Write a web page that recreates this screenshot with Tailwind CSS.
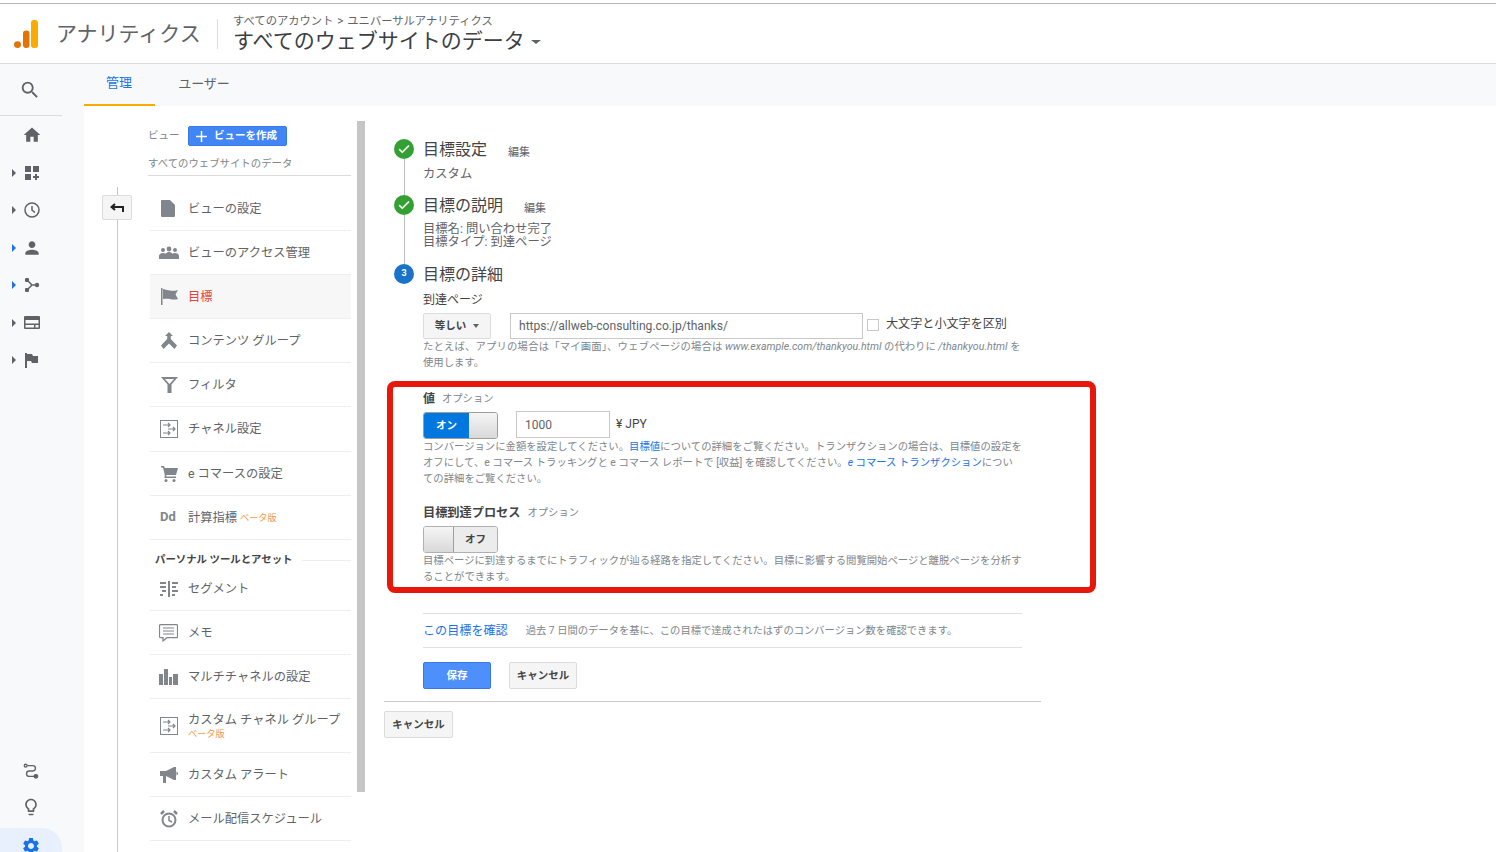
<!DOCTYPE html>
<html lang="ja">

<head>
    <meta charset="UTF-8">
    <meta name="viewport" content="width=device-width, initial-scale=1.0">
    <title>アナリティクス</title>
    <script src="https://cdn.jsdelivr.net/npm/@tailwindcss/browser@4"></script>
</head>

<body class="bg-white font-['Roboto','Noto_Sans_CJK_JP',sans-serif] text-[#5f6368]">
    <div class="relative w-[1496px] h-[852px] overflow-hidden flex flex-col">

        <!-- Header -->
        <header class="h-[61px] shrink-0 border-t border-t-[#b5b5b5] mt-[3px] border-b border-b-[#dadce0] flex items-center pl-[14px]">
            <svg class="w-[25px] h-[28px] mt-[1px] mr-[17px]" viewBox="0 0 25 29" preserveAspectRatio="none">
                <circle cx="3.500" cy="25.500" r="3.500" fill="#e37400" />
                <rect x="9" y="11" width="6.500" height="18" rx="3" fill="#e37400" />
                <rect x="17" y="0" width="7" height="29" rx="3" fill="#f9ab00" />
            </svg>
            <span class="text-[21px] text-[#5f6368] w-[161px] leading-none mt-[1px]">アナリティクス</span>
            <div class="h-[30px] border-l border-[#dadce0] mr-[15px]"></div>
            <div class="flex flex-col -mt-[2px]">
                <span class="text-[11.300px] leading-[16px] text-[#5f6368]">すべてのアカウント <span class="text-[12px] mx-[1px]">&gt;</span> ユニバーサルアナリティクス</span>
                <div class="flex items-center">
                    <span class="text-[21px] leading-[23px] text-[#3c4043]">すべてのウェブサイトのデータ</span>
                    <div class="ml-[6px] mt-[2px] w-0 h-0 border-x-[5px] border-x-transparent border-t-[4px] border-t-[#5f6368]"></div>
                </div>
            </div>
        </header>

        <div class="flex flex-1 min-h-0">
            <!-- Left rail -->
            <nav class="w-[84px] shrink-0 bg-[#f8f9fa] flex flex-col justify-between">
                <div>
                    <div class="w-[62px] h-[52px] border-b border-[#dadce0] flex items-center justify-center pr-[2px]">
                        <svg class="w-[22px] h-[22px] fill-[#5f6368]" viewBox="0 0 24 24"><path d="M15.500 14h-.79l-.28-.27A6.471 6.471 0 0 0 16 9.500 6.500 6.500 0 1 0 9.500 16c1.610 0 3.090-.59 4.230-1.570l.27.28v.79l5 4.990L20.490 19l-4.990-5zm-6 0C7.010 14 5 11.990 5 9.500S7.010 5 9.500 5 14 7.010 14 9.500 11.990 14 9.500 14z" /></svg>
                    </div>
                    <div class="flex flex-col pt-[0.500px]">
                        <div class="h-[37.500px] flex items-center pl-[22px]"><svg class="w-[20px] h-[20px] fill-[#5f6368]" viewBox="0 0 24 24"><path d="M10 20v-6h4v6h5v-8h3L12 3 2 12h3v8z" /></svg></div>
                        <div class="h-[37.500px] flex items-center pl-[12px]">
                            <div class="w-0 h-0 border-y-[4px] border-y-transparent border-l-[4px] border-l-[#5f6368] mr-[8px]"></div>
                            <svg class="w-[16px] h-[16px] fill-[#5f6368]" viewBox="0 0 16 16"><path d="M1 1h6v6H1zM9 1h6v6H9zM1 9h6v6H1zM11 9h2v2h2v2h-2v2h-2v-2H9v-2h2z" /></svg>
                        </div>
                        <div class="h-[37.500px] flex items-center pl-[12px]">
                            <div class="w-0 h-0 border-y-[4px] border-y-transparent border-l-[4px] border-l-[#5f6368] mr-[8px]"></div>
                            <svg class="w-[16px] h-[16px] fill-none stroke-[#5f6368] stroke-[1.500]" viewBox="0 0 16 16"><circle cx="8" cy="8" r="7" /><path d="M8 4v4.200l3 2.300" /></svg>
                        </div>
                        <div class="h-[37.500px] flex items-center pl-[12px]">
                            <div class="w-0 h-0 border-y-[4px] border-y-transparent border-l-[4px] border-l-[#1a73e8] mr-[6px]"></div>
                            <svg class="w-[20px] h-[20px] fill-[#5f6368]" viewBox="0 0 24 24"><path d="M12 12c2.210 0 4-1.790 4-4s-1.790-4-4-4-4 1.790-4 4 1.790 4 4 4zm0 2c-2.670 0-8 1.340-8 4v2h16v-2c0-2.660-5.330-4-8-4z" /></svg>
                        </div>
                        <div class="h-[37.500px] flex items-center pl-[12px]">
                            <div class="w-0 h-0 border-y-[4px] border-y-transparent border-l-[4px] border-l-[#1a73e8] mr-[8px]"></div>
                            <svg class="w-[16px] h-[16px] fill-[#5f6368] stroke-[#5f6368]" viewBox="0 0 16 16"><path d="M3 3l5 5-5 5M8 8h5" fill="none" stroke-width="1.500" /><rect x="1" y="1" width="4" height="4" rx="1" stroke="none" /><rect x="1" y="11" width="4" height="4" rx="1" stroke="none" /><circle cx="13" cy="8" r="2.200" stroke="none" /></svg>
                        </div>
                        <div class="h-[37.500px] flex items-center pl-[12px]">
                            <div class="w-0 h-0 border-y-[4px] border-y-transparent border-l-[4px] border-l-[#5f6368] mr-[8px]"></div>
                            <svg class="w-[16px] h-[13px] fill-[#5f6368]" viewBox="0 0 16 13"><path fill-rule="evenodd" d="M1 0h14a1 1 0 0 1 1 1v11a1 1 0 0 1-1 1H1a1 1 0 0 1-1-1V1a1 1 0 0 1 1-1zm.500 4v3.500h13V4zm0 5v2.500h8.500V9zm10 0v2.500h3V9z" /></svg>
                        </div>
                        <div class="h-[37.500px] flex items-center pl-[12px]">
                            <div class="w-0 h-0 border-y-[4px] border-y-transparent border-l-[4px] border-l-[#5f6368] mr-[9px]"></div>
                            <svg class="w-[13px] h-[15px] fill-[#5f6368]" viewBox="0 0 13 15"><path d="M0 0h2v15H0zM2 1h5l1 2h5v7H7L6 8H2z" /></svg>
                        </div>
                    </div>
                </div>
                <div class="flex flex-col">
                    <div class="w-[62px] h-[36px] pb-[6px] flex items-center justify-center">
                        <svg class="w-[16px] h-[16px] fill-none stroke-[#5f6368] stroke-[1.500]" viewBox="0 0 18 18"><circle cx="3" cy="3" r="1.600" /><path d="M5 3h6a3 3 0 0 1 0 6H7a3 3 0 0 0 0 6h6" /><circle cx="14.500" cy="15" r="2" class="fill-[#5f6368]" /></svg>
                    </div>
                    <div class="w-[62px] h-[36px] pb-[6px] flex items-center justify-center">
                        <svg class="w-[20px] h-[20px] fill-[#5f6368]" viewBox="0 0 24 24"><path d="M9 21c0 .55.45 1 1 1h4c.55 0 1-.45 1-1v-1H9v1zm3-19C8.140 2 5 5.140 5 9c0 2.380 1.190 4.470 3 5.740V17c0 .55.45 1 1 1h6c.55 0 1-.45 1-1v-2.260c1.810-1.270 3-3.360 3-5.740 0-3.860-3.140-7-7-7zm2.850 11.100l-.85.6V16h-4v-2.300l-.85-.6A4.997 4.997 0 0 1 7 9c0-2.760 2.240-5 5-5s5 2.240 5 5c0 1.630-.8 3.160-2.150 4.100z" /></svg>
                    </div>
                    <div class="w-[62px] h-[24px] bg-[#e8f0fe] rounded-tr-[20px] flex items-start justify-center pt-[8px] overflow-hidden">
                        <svg class="w-[20px] h-[20px] shrink-0 fill-[#1a73e8]" viewBox="0 0 24 24"><path d="M19.140 12.940c.04-.3.06-.61.06-.94 0-.32-.02-.64-.07-.94l2.030-1.580a.49.49 0 0 0 .12-.61l-1.920-3.320a.488.488 0 0 0-.59-.22l-2.390.96c-.5-.38-1.030-.7-1.620-.94l-.36-2.540a.484.484 0 0 0-.48-.41h-3.840c-.24 0-.43.17-.47.41l-.36 2.540c-.59.24-1.130.57-1.620.94l-2.390-.96c-.22-.08-.47 0-.59.22L2.740 8.870c-.12.21-.08.47.12.61l2.030 1.580c-.05.3-.09.63-.09.94s.02.64.07.94l-2.030 1.580a.49.49 0 0 0-.12.61l1.920 3.320c.12.22.37.29.59.22l2.390-.96c.5.38 1.030.7 1.620.94l.36 2.540c.05.24.24.41.48.41h3.840c.24 0 .44-.17.47-.41l.36-2.540c.59-.24 1.130-.56 1.620-.94l2.390.96c.22.08.47 0 .59-.22l1.920-3.320c.12-.22.07-.47-.12-.61l-2.010-1.580zM12 15.600c-1.980 0-3.600-1.620-3.600-3.600s1.620-3.600 3.600-3.600 3.600 1.620 3.600 3.600-1.620 3.600-3.600 3.600z" /></svg>
                    </div>
                </div>
            </nav>

            <div class="flex-1 flex flex-col min-w-0">
                <!-- Tabs -->
                <div class="h-[42px] shrink-0 bg-[#f8f9fa] flex text-[13px]">
                    <div class="w-[71px] border-b-2 border-[#f9ab00] text-[#1a73e8] flex items-center justify-center pb-[2px] pr-[1px]">管理</div>
                    <div class="w-[98px] flex items-center justify-center pb-[2px] text-[#5f6368]">ユーザー</div>
                </div>

                <div class="flex flex-1 min-h-0">
                    <!-- Admin column -->
                    <div class="flex shrink-0 w-[281px]">
                        <div class="relative w-[66px] shrink-0">
                            <div class="absolute left-[33px] top-[81px] bottom-0 border-l border-[#c8c8c8]"></div>
                            <div class="absolute left-[18px] top-[89px] w-[30px] h-[25px] bg-[#f5f5f5] border border-[#dcdcdc] rounded-[2px] flex items-center justify-center">
                                <svg class="w-[14px] h-[10px] fill-none stroke-[#222] stroke-2" viewBox="0 0 14 10"><path d="M5 1L1.500 4 5 7M2 4h11v5" /></svg>
                            </div>
                        </div>
                        <div class="w-[207px] shrink-0 text-[12.250px] leading-[16px]">
                            <div class="h-[70px] -ml-[2px] w-[203px] border-b border-[#dadce0] pt-[20px]">
                                <div class="flex items-center h-[20px]">
                                    <span class="text-[10.500px] text-[#80868b] w-[40px]">ビュー</span>
                                    <div class="w-[99px] h-[20px] bg-[#4285f4] border border-[#3b78e7] rounded-[2px] flex items-center pl-[7px] text-white text-[10.500px] font-bold">
                                        <svg class="w-[11px] h-[11px] stroke-white stroke-[1.500] mr-[7px]" viewBox="0 0 11 11"><path d="M5.500 0v11M0 5.500h11" /></svg>
                                        ビューを作成
                                    </div>
                                </div>
                                <div class="text-[10.400px] text-[#80868b] mt-[10px]">すべてのウェブサイトのデータ</div>
                            </div>
                            <div class="mt-[11px] w-[201px] flex flex-col">
                                <div class="h-[44px] border-b border-[#eeeeee] flex items-center">
                                    <div class="w-[38px] flex justify-center pr-[2px]"><svg class="w-[14px] h-[17px] fill-[#80868b]" viewBox="0 0 14 17"><path d="M1 0h8l5 5v11a1 1 0 0 1-1 1H1a1 1 0 0 1-1-1V1a1 1 0 0 1 1-1z" /></svg></div>
                                    <span>ビューの設定</span>
                                </div>
                                <div class="h-[44px] border-b border-[#eeeeee] flex items-center">
                                    <div class="w-[38px] flex justify-center"><svg class="w-[22px] h-[22px] fill-[#80868b]" viewBox="0 0 22 22"><circle cx="5" cy="8" r="2" /><circle cx="11" cy="7" r="2.400" /><circle cx="17" cy="8" r="2" /><path d="M1 17v-3c0-2 2-3 4-3 1 0 2 .3 2.500.7C8.500 10.500 10 10 11 10s2.500.5 3.500 1.700c.5-.4 1.500-.7 2.500-.7 2 0 4 1 4 3v3z" /></svg></div>
                                    <span>ビューのアクセス管理</span>
                                </div>
                                <div class="h-[44px] bg-[#f7f7f7] border-b border-[#eeeeee] flex items-center">
                                    <div class="w-[38px] flex justify-center"><svg class="w-[17px] h-[17px] fill-[#80868b]" viewBox="0 0 17 17"><path d="M0 0h1.500v17H0zM2 1c3 1 5 1 7 1.500 2 .5 5 .5 8-.5l-2.500 4.500L17 11c-3 1-6 .5-8 0s-4-.500-7 0z" /></svg></div>
                                    <span class="text-[#ea4335]">目標</span>
                                </div>
                                <div class="h-[44px] border-b border-[#eeeeee] flex items-center">
                                    <div class="w-[38px] flex justify-center"><svg class="w-[16px] h-[17px] fill-[#80868b]" viewBox="0 0 16 17"><path d="M8 0l4 4H9.800v3L16 13.500 13.500 17 8 11.500 2.500 17 0 13.500 6.200 7V4H4z" /></svg></div>
                                    <span>コンテンツ グループ</span>
                                </div>
                                <div class="h-[44px] border-b border-[#eeeeee] flex items-center">
                                    <div class="w-[38px] flex justify-center"><svg class="w-[17px] h-[16px] fill-[#80868b]" viewBox="0 0 17 16"><path fill-rule="evenodd" d="M0 0h17l-6.500 7.500V16h-4V7.500zM4 2l4.500 5L13 2z" /></svg></div>
                                    <span>フィルタ</span>
                                </div>
                                <div class="h-[45px] border-b border-[#eeeeee] flex items-center">
                                    <div class="w-[38px] flex justify-center"><svg class="w-[18px] h-[18px] fill-none stroke-[#80868b]" viewBox="0 0 18 18"><rect x=".5" y=".5" width="17" height="17" /><path d="M3 5h7M8 3l2 2-2 2M15 9H8M13 7l2 2-2 2M3 13h7M8 11l2 2-2 2" stroke-width="1.200" /></svg></div>
                                    <span>チャネル設定</span>
                                </div>
                                <div class="h-[44px] border-b border-[#eeeeee] flex items-center">
                                    <div class="w-[38px] flex justify-center"><svg class="w-[17px] h-[16px] fill-[#80868b]" viewBox="0 0 17 16"><path d="M0 0h3l.8 2H17l-2 7H5.500l-.3 1.500H15V12H3.500L3.800 9 2 1.500H0z" /><circle cx="5" cy="14.500" r="1.500" /><circle cx="13" cy="14.500" r="1.500" /></svg></div>
                                    <span>e コマースの設定</span>
                                </div>
                                <div class="h-[44px] border-b border-[#eeeeee] flex items-center">
                                    <div class="w-[38px] pl-[10px] text-[13px] font-bold text-[#80868b] -mt-[2px]">Dd</div>
                                    <span>計算指標</span><span class="ml-[3px] text-[9.200px] text-[#f29c4b]">ベータ版</span>
                                </div>
                                <div class="h-[27px] flex items-start pt-[12px] pl-[5px] font-bold text-[10.400px] text-[#444]">
                                    <span class="whitespace-nowrap leading-[16px]">パーソナル ツールとアセット</span>
                                    <div class="flex-1 border-t border-[#eeeeee] ml-[10px] mt-[8px]"></div>
                                </div>
                                <div class="h-[44px] border-b border-[#eeeeee] flex items-center">
                                    <div class="w-[38px] flex justify-center"><svg class="w-[18px] h-[16px] fill-[#80868b]" viewBox="0 0 18 16"><path d="M8 0h2v16H8zM0 1h6v2H0zM0 5h6v2H0zM2 9h4v2H2zM0 13h3v2H0zM12 1h6v2h-6zM12 5h4v2h-4zM12 9h6v2h-6zM12 13h3v2h-3z" /></svg></div>
                                    <span>セグメント</span>
                                </div>
                                <div class="h-[44px] border-b border-[#eeeeee] flex items-center">
                                    <div class="w-[38px] flex justify-center pr-[2px]"><svg class="w-[19px] h-[18px] fill-none stroke-[#80868b]" viewBox="0 0 19 18"><path d="M1.500.7h16a1 1 0 0 1 1 1v11a1 1 0 0 1-1 1H8L4 17v-3.300H1.500a1 1 0 0 1-1-1v-11a1 1 0 0 1 1-1z" stroke-width="1.200" /><path d="M4 4h11M4 7h11M4 10h11" stroke-width="1.200" /></svg></div>
                                    <span>メモ</span>
                                </div>
                                <div class="h-[44px] border-b border-[#eeeeee] flex items-center">
                                    <div class="w-[38px] flex justify-center pr-[2px]"><svg class="w-[19px] h-[16px] fill-[#80868b]" viewBox="0 0 19 16"><path d="M0 5h4v11H0zM5 0h4v16H5zM10 8h3v8h-3zM14 5h5v11h-5z" /></svg></div>
                                    <span>マルチチャネルの設定</span>
                                </div>
                                <div class="h-[54px] border-b border-[#eeeeee] flex items-center">
                                    <div class="w-[38px] flex justify-center"><svg class="w-[18px] h-[18px] fill-none stroke-[#80868b]" viewBox="0 0 18 18"><rect x=".5" y=".5" width="17" height="17" /><path d="M3 5h7M8 3l2 2-2 2M15 9H8M13 7l2 2-2 2M3 13h7M8 11l2 2-2 2" stroke-width="1.200" /></svg></div>
                                    <div class="flex flex-col pt-[2px]">
                                        <span class="leading-[15px] whitespace-nowrap">カスタム チャネル グループ</span>
                                        <span class="text-[9.200px] leading-[12px] text-[#f29c4b]">ベータ版</span>
                                    </div>
                                </div>
                                <div class="h-[44px] border-b border-[#eeeeee] flex items-center">
                                    <div class="w-[38px] flex justify-center"><svg class="w-[18px] h-[16px] fill-[#80868b]" viewBox="0 0 18 16"><path d="M0 4h6l8-4h2v13h-2L6 9v7H3V9H0zM16.500 4.500c1 .5 1.500 1 1.500 2s-.5 1.500-1.500 2z" /></svg></div>
                                    <span>カスタム アラート</span>
                                </div>
                                <div class="h-[44px] border-b border-[#eeeeee] flex items-center">
                                    <div class="w-[38px] flex justify-center"><svg class="w-[18px] h-[18px] fill-none stroke-[#80868b]" viewBox="0 0 18 18"><circle cx="9" cy="10" r="6.500" stroke-width="2" /><path d="M9 6v4.500l3 1.500" stroke-width="1.500" /><path d="M1 4l3-3M17 4l-3-3" stroke-width="2.500" /></svg></div>
                                    <span>メール配信スケジュール</span>
                                </div>
                            </div>
                        </div>
                        <div class="w-[8px] h-[671px] mt-[15px] bg-[#c6c6c6]"></div>
                    </div>

                    <!-- Goal form -->
                    <div class="pl-[19px] w-[676px] shrink-0 pt-[33px]">
                        <div class="flex h-[56px]">
                            <div class="w-[39px] flex flex-col items-start pl-[10px]">
                                <div class="w-[20px] h-[20px] rounded-full bg-[#34a034] flex items-center justify-center shrink-0">
                                    <svg class="w-[14px] h-[14px] fill-white" viewBox="0 0 24 24"><path d="M9 16.170L4.830 12l-1.420 1.410L9 19 21 7l-1.410-1.410z" stroke="white" /></svg>
                                </div>
                                <div class="ml-[9.500px] flex-1 border-l border-[#bdbdbd]"></div>
                            </div>
                            <div>
                                <div class="h-[20px] pt-[2px] flex items-center">
                                    <span class="text-[16px] text-[#444]">目標設定</span>
                                    <span class="ml-[21px] mt-[6px] text-[11px] text-[#5f6368]">編集</span>
                                </div>
                                <div class="mt-[6px] text-[12.300px] leading-[18px]">カスタム</div>
                            </div>
                        </div>
                        <div class="flex h-[69px]">
                            <div class="w-[39px] flex flex-col items-start pl-[10px]">
                                <div class="w-[20px] h-[20px] rounded-full bg-[#34a034] flex items-center justify-center shrink-0">
                                    <svg class="w-[14px] h-[14px] fill-white" viewBox="0 0 24 24"><path d="M9 16.170L4.830 12l-1.420 1.410L9 19 21 7l-1.410-1.410z" stroke="white" /></svg>
                                </div>
                                <div class="ml-[9.500px] flex-1 border-l border-[#bdbdbd]"></div>
                            </div>
                            <div>
                                <div class="h-[20px] pt-[2px] flex items-center">
                                    <span class="text-[16px] text-[#444]">目標の説明</span>
                                    <span class="ml-[21px] mt-[6px] text-[11px] text-[#5f6368]">編集</span>
                                </div>
                                <div class="mt-[8px] text-[12.300px] leading-[13px]">目標名: 問い合わせ完了<br>目標タイプ: 到達ページ</div>
                            </div>
                        </div>
                        <div class="flex">
                            <div class="w-[39px] pl-[10px]">
                                <div class="w-[20px] h-[20px] rounded-full bg-[#1a73c8] text-white text-[9px] font-bold flex items-center justify-center">3</div>
                            </div>
                            <div class="w-[600px]">
                                <div class="h-[20px] pt-[2px] flex items-center text-[16px] text-[#444]">目標の詳細</div>
                                <div class="mt-[8px] text-[12px] leading-[16px] text-[#444]">到達ページ</div>
                                <div class="mt-[5px] flex items-start h-[26px] whitespace-nowrap">
                                    <div class="w-[68px] h-[26px] bg-[#f5f5f5] border border-[#dcdcdc] rounded-[2px] flex items-center justify-center text-[10.500px] font-bold text-[#444]">
                                        等しい
                                        <div class="ml-[7px] w-0 h-0 border-x-[3px] border-x-transparent border-t-[4px] border-t-[#5f6368]"></div>
                                    </div>
                                    <div class="ml-[19px] w-[353px] h-[26px] border border-[#c8c8c8] flex items-center pl-[8px] text-[12.100px] text-[#5f6368]">https://allweb-consulting.co.jp/thanks/</div>
                                    <div class="ml-[4px] mt-[6px] w-[12px] h-[12px] border border-[#c8c8c8]"></div>
                                    <span class="ml-[7px] text-[12.100px] leading-[26px] -mt-[2px] text-[#444]">大文字と小文字を区別</span>
                                </div>
                                <p class="text-[10.350px] leading-[16px] text-[#80868b] whitespace-nowrap"><span class="tracking-[0.170px]">たとえば、アプリの場合は「マイ画面」、ウェブページの場合は</span> <i class="text-[10.600px]">www.example.com/thankyou.html</i> の代わりに <i class="text-[10.600px]">/thankyou.html</i> を<br>使用します。</p>

                                <div class="mt-[20px] h-[16px] flex items-center">
                                    <span class="text-[12px] font-bold text-[#444]">値</span>
                                    <span class="ml-[7px] text-[10.300px] text-[#80868b]">オプション</span>
                                </div>
                                <div class="mt-[4px] flex h-[28px]">
                                    <div class="mt-[1px] w-[75px] h-[27px] flex rounded-[3px] border border-[#9e9e9e] overflow-hidden">
                                        <div class="w-[45px] bg-[#0277e0] text-white text-[10.500px] font-bold flex items-center justify-center">オン</div>
                                        <div class="flex-1 bg-linear-to-b from-[#f5f5f5] to-[#d9d9d9]"></div>
                                    </div>
                                    <div class="ml-[18px] w-[94px] h-[27px] border border-[#c8c8c8] flex items-center pl-[8px] text-[12px]">1000</div>
                                    <span class="ml-[6px] text-[12px] leading-[27px] text-[#444]">¥ JPY</span>
                                </div>
                                <p class="text-[10.350px] leading-[16px] text-[#80868b] whitespace-nowrap">コンバージョンに金額を設定してください。<span class="text-[#1a73e8]">目標値</span>についての詳細をご覧ください。トランザクションの場合は、目標値の設定を<br>オフにして、e コマース トラッキングと e コマース レポートで [収益] を確認してください。<span class="text-[#1a73e8]"><i>e</i> コマース トランザクション</span>につい<br>ての詳細をご覧ください。</p>

                                <div class="mt-[16px] h-[20px] flex items-center">
                                    <span class="text-[12.200px] font-bold text-[#444]">目標到達プロセス</span>
                                    <span class="ml-[7px] text-[10.300px] text-[#80868b]">オプション</span>
                                </div>
                                <div class="mt-[3px] w-[75px] h-[27px] flex rounded-[3px] border border-[#b0b0b0] overflow-hidden">
                                    <div class="w-[30px] bg-linear-to-b from-[#f5f5f5] to-[#d9d9d9] border-r border-[#9e9e9e]"></div>
                                    <div class="flex-1 bg-[#ececec] text-[#444] text-[10.500px] font-bold flex items-center justify-center">オフ</div>
                                </div>
                                <p class="text-[10.350px] leading-[16px] text-[#80868b] whitespace-nowrap">目標ページに到達するまでにトラフィックが辿る経路を指定してください。目標に影響する閲覧開始ページと離脱ページを分析す<br>ることができます。</p>

                                <div class="mt-[28px] w-[599px] h-[35px] pt-[1px] border-y border-[#e0e0e0] flex items-center whitespace-nowrap">
                                    <span class="text-[12.100px] text-[#1a73e8]">この目標を確認</span>
                                    <span class="ml-[18px] text-[10.300px] text-[#80868b]">過去 7 日間のデータを基に、この目標で達成されたはずのコンバージョン数を確認できます。</span>
                                </div>
                                <div class="mt-[14px] flex gap-[18px]">
                                    <div class="w-[68px] h-[27px] bg-[#4d8ffb] border border-[#3b78e7] rounded-[2px] text-white text-[10.500px] font-bold flex items-center justify-center">保存</div>
                                    <div class="w-[68px] h-[27px] bg-[#f5f5f5] border border-[#dcdcdc] rounded-[2px] text-[#444] text-[10.500px] font-bold flex items-center justify-center">キャンセル</div>
                                </div>
                            </div>
                        </div>
                        <div class="mt-[12px] w-[657px] border-t border-[#c8c8c8]"></div>
                        <div class="mt-[9px] w-[69px] h-[27px] bg-[#f5f5f5] border border-[#dcdcdc] rounded-[2px] text-[#444] text-[10.500px] font-bold flex items-center justify-center">キャンセル</div>
                    </div>
                </div>
            </div>
        </div>

        <!-- Red annotation box drawn over the form -->
        <div class="absolute left-[387px] top-[381px] w-[709px] h-[212px] border-[6px] border-[#e8170b] rounded-[8px] pointer-events-none"></div>
    </div>
</body>

</html>
